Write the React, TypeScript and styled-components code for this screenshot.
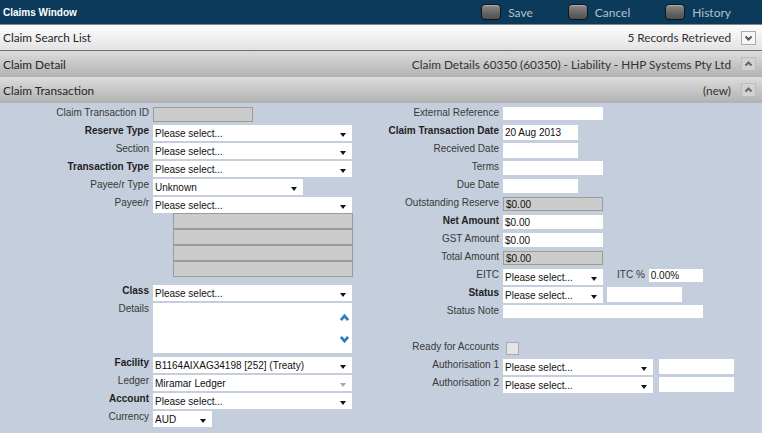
import React from "react";
import styled, { createGlobalStyle } from "styled-components";

const GlobalStyle = createGlobalStyle`
  html, body {
    margin: 0;
    padding: 0;
    background: #c5cedc;
  }
  body {
    font-family: "Liberation Sans", Arial, sans-serif;
  }
  * {
    box-sizing: border-box;
  }
`;

const Window = styled.div`
  width: 762px;
  height: 433px;
  overflow: hidden;
  display: flex;
  flex-direction: column;
  background: #c5cedc;
`;

const TopBar = styled.div`
  height: 25px;
  flex: none;
  display: flex;
  align-items: center;
  padding: 0 31px 0 3px;
  background: #0b3a5b;
  border-bottom: 1px solid #7e8994;
`;

const Title = styled.div`
  flex: 1;
  color: #ffffff;
  font-size: 10px;
  font-weight: 700;
`;

const Toolbar = styled.div`
  display: flex;
  align-items: center;
  gap: 35px;
`;

const ToolButton = styled.div`
  display: flex;
  align-items: center;
  gap: 7px;
  font-family: Lato, "Liberation Sans", sans-serif;
  font-size: 12px;
  color: #b3c0ce;
`;

const ToolIcon = styled.span`
  width: 20px;
  height: 16px;
  border-radius: 4px;
  border: 1px solid #141414;
  background: linear-gradient(#8c8c8c, #666666 55%, #505050);
  box-shadow: inset 0 1px 0 rgba(255, 255, 255, 0.3);
`;

const SectionBar = styled.div<{ $tone: "light" | "dark" }>`
  height: 26px;
  flex: none;
  display: flex;
  align-items: center;
  gap: 10px;
  padding: 0 6px 0 3px;
  font-family: Lato, "Liberation Sans", sans-serif;
  font-size: 11.8px;
  color: #262626;
  background: ${(p) =>
    p.$tone === "light"
      ? "linear-gradient(#fdfdfd, #e3e3e3)"
      : "linear-gradient(#dcdcdc, #b2b2b2)"};
  border-bottom: ${(p) => (p.$tone === "light" ? "1px solid #6e6e6e" : "none")};
`;

const BarTitle = styled.div`
  flex: 1;
`;

const BarInfo = styled.div`
  color: #333;
`;

const Toggle = styled.div<{ $tone: "light" | "dark" }>`
  width: 15px;
  height: 14px;
  display: flex;
  align-items: center;
  justify-content: center;
  border: 1px solid ${(p) => (p.$tone === "light" ? "#a9a9a9" : "#bdbdbd")};
  background: ${(p) => (p.$tone === "light" ? "#f6f6f6" : "#d2d2d2")};
`;

const FormBody = styled.div`
  flex: 1;
  display: flex;
  align-items: flex-start;
  padding-top: 4px;
`;

const Column = styled.div<{ $w: number }>`
  width: ${(p) => p.$w}px;
  display: flex;
  flex-direction: column;
`;

const Row = styled.div<{ $label: number; $h?: number; $after?: number }>`
  display: grid;
  grid-template-columns: ${(p) => p.$label}px auto;
  column-gap: 4px;
  align-items: start;
  height: ${(p) => p.$h ?? 16}px;
  margin-bottom: ${(p) => p.$after ?? 2}px;
`;

const Label = styled.label<{ $strong?: boolean }>`
  font-size: 10px;
  line-height: 12px;
  text-align: right;
  white-space: nowrap;
  color: ${(p) => (p.$strong ? "#1f1f1f" : "#383838")};
  font-weight: ${(p) => (p.$strong ? 700 : 400)};
`;

const InlineLabel = styled.span`
  font-size: 10px;
  line-height: 12px;
  color: #383838;
  margin: 0 0 0 10px;
  white-space: nowrap;
`;

const FieldGroup = styled.div<{ $gap: number }>`
  display: flex;
  align-items: flex-start;
  gap: ${(p) => p.$gap}px;
`;

const SelectBox = styled.div<{ $w: number }>`
  width: ${(p) => p.$w}px;
  height: 16px;
  display: flex;
  align-items: center;
  padding: 1px 6px 0 2px;
  background: #ffffff;
  font-size: 10px;
  color: #111;
`;

const SelectText = styled.span`
  flex: 1;
  white-space: nowrap;
  overflow: hidden;
`;

const Caret = styled.span<{ $muted?: boolean }>`
  width: 0;
  height: 0;
  margin-top: 2px;
  border-left: 3.5px solid transparent;
  border-right: 3.5px solid transparent;
  border-top: 4px solid ${(p) => (p.$muted ? "#a8a8a8" : "#141414")};
`;

const TextBox = styled.div<{ $w: number; $h: number; $grey?: boolean }>`
  width: ${(p) => p.$w}px;
  height: ${(p) => p.$h}px;
  display: flex;
  align-items: center;
  padding-left: 2px;
  font-size: 10px;
  color: #111;
  white-space: nowrap;
  background: ${(p) => (p.$grey ? "#cccccc" : "#ffffff")};
  border: ${(p) => (p.$grey ? "1px solid #9b9b9b" : "none")};
`;

const AddressStack = styled.div`
  margin-left: 20px;
  width: 180px;
  display: flex;
  flex-direction: column;
`;

const AddressLine = styled.div`
  height: 16px;
  background: #cccccc;
  border: 1px solid #9b9b9b;
`;

const NotesBox = styled.div`
  width: 199px;
  height: 50px;
  background: #ffffff;
  display: flex;
  justify-content: flex-end;
`;

const ScrollArrows = styled.div`
  width: 16px;
  padding-top: 11px;
  display: flex;
  flex-direction: column;
  align-items: center;
  gap: 13px;
`;

const CheckBox = styled.span`
  width: 13px;
  height: 13px;
  margin: 1px 0 0 3px;
  background: #e4e4e4;
  border: 1px solid #ababab;
`;

type Dir = "up" | "down";

const Chevron: React.FC<{ dir: Dir; color: string; w: number; h: number; stroke: number }> = ({
  dir,
  color,
  w,
  h,
  stroke,
}) => {
  const pad = stroke / 2 + 0.5;
  const pts =
    dir === "down"
      ? `${pad},${pad} ${w / 2},${h - pad} ${w - pad},${pad}`
      : `${pad},${h - pad} ${w / 2},${pad} ${w - pad},${h - pad}`;
  return (
    <svg width={w} height={h} viewBox={`0 0 ${w} ${h}`}>
      <polyline points={pts} fill="none" stroke={color} strokeWidth={stroke} strokeLinejoin="miter" />
    </svg>
  );
};

const Select: React.FC<{ w: number; value?: string; muted?: boolean }> = ({ w, value = "Please select...", muted }) => (
  <SelectBox $w={w}>
    <SelectText>{value}</SelectText>
    <Caret $muted={muted} />
  </SelectBox>
);

const L = 149;
const R = 145;

export default function App() {
  return (
    <>
      <GlobalStyle />
      <Window>
        <TopBar>
          <Title>Claims Window</Title>
          <Toolbar>
            <ToolButton>
              <ToolIcon />
              Save
            </ToolButton>
            <ToolButton>
              <ToolIcon />
              Cancel
            </ToolButton>
            <ToolButton>
              <ToolIcon />
              History
            </ToolButton>
          </Toolbar>
        </TopBar>

        <SectionBar $tone="light">
          <BarTitle>Claim Search List</BarTitle>
          <BarInfo>5 Records Retrieved</BarInfo>
          <Toggle $tone="light">
            <Chevron dir="down" color="#555" w={9} h={6} stroke={2} />
          </Toggle>
        </SectionBar>
        <SectionBar $tone="dark">
          <BarTitle>Claim Detail</BarTitle>
          <BarInfo>Claim Details 60350 (60350) - Liability - HHP Systems Pty Ltd</BarInfo>
          <Toggle $tone="dark">
            <Chevron dir="up" color="#666" w={9} h={6} stroke={2} />
          </Toggle>
        </SectionBar>
        <SectionBar $tone="dark">
          <BarTitle>Claim Transaction</BarTitle>
          <BarInfo>(new)</BarInfo>
          <Toggle $tone="dark">
            <Chevron dir="up" color="#666" w={9} h={6} stroke={2} />
          </Toggle>
        </SectionBar>

        <FormBody>
          <Column $w={354}>
            <Row $label={L}>
              <Label>Claim Transaction ID</Label>
              <TextBox $w={100} $h={15} $grey />
            </Row>
            <Row $label={L}>
              <Label $strong>Reserve Type</Label>
              <Select w={199} />
            </Row>
            <Row $label={L}>
              <Label>Section</Label>
              <Select w={199} />
            </Row>
            <Row $label={L}>
              <Label $strong>Transaction Type</Label>
              <Select w={199} />
            </Row>
            <Row $label={L}>
              <Label>Payee/r Type</Label>
              <Select w={150} value="Unknown" />
            </Row>
            <Row $label={L} $after={0}>
              <Label>Payee/r</Label>
              <Select w={199} />
            </Row>
            <Row $label={L} $h={64} $after={8}>
              <span />
              <AddressStack>
                <AddressLine />
                <AddressLine />
                <AddressLine />
                <AddressLine />
              </AddressStack>
            </Row>
            <Row $label={L}>
              <Label $strong>Class</Label>
              <Select w={199} />
            </Row>
            <Row $label={L} $h={50} $after={4}>
              <Label>Details</Label>
              <NotesBox>
                <ScrollArrows>
                  <Chevron dir="up" color="#2f7dc0" w={11} h={8} stroke={2.8} />
                  <Chevron dir="down" color="#2f7dc0" w={11} h={8} stroke={2.8} />
                </ScrollArrows>
              </NotesBox>
            </Row>
            <Row $label={L}>
              <Label $strong>Facility</Label>
              <Select w={199} value="B1164AIXAG34198 [252] (Treaty)" />
            </Row>
            <Row $label={L}>
              <Label>Ledger</Label>
              <Select w={199} value="Miramar Ledger" muted />
            </Row>
            <Row $label={L}>
              <Label $strong>Account</Label>
              <Select w={199} />
            </Row>
            <Row $label={L}>
              <Label>Currency</Label>
              <Select w={59} value="AUD" />
            </Row>
          </Column>

          <Column $w={408}>
            <Row $label={R}>
              <Label>External Reference</Label>
              <TextBox $w={100} $h={13} />
            </Row>
            <Row $label={R}>
              <Label $strong>Claim Transaction Date</Label>
              <TextBox $w={75} $h={15}>20 Aug 2013</TextBox>
            </Row>
            <Row $label={R}>
              <Label>Received Date</Label>
              <TextBox $w={75} $h={15} />
            </Row>
            <Row $label={R}>
              <Label>Terms</Label>
              <TextBox $w={100} $h={14} />
            </Row>
            <Row $label={R}>
              <Label>Due Date</Label>
              <TextBox $w={75} $h={14} />
            </Row>
            <Row $label={R}>
              <Label>Outstanding Reserve</Label>
              <TextBox $w={100} $h={14} $grey>$0.00</TextBox>
            </Row>
            <Row $label={R}>
              <Label $strong>Net Amount</Label>
              <TextBox $w={100} $h={14}>$0.00</TextBox>
            </Row>
            <Row $label={R}>
              <Label>GST Amount</Label>
              <TextBox $w={100} $h={14}>$0.00</TextBox>
            </Row>
            <Row $label={R}>
              <Label>Total Amount</Label>
              <TextBox $w={100} $h={14} $grey>$0.00</TextBox>
            </Row>
            <Row $label={R}>
              <Label>EITC</Label>
              <FieldGroup $gap={4}>
                <Select w={100} />
                <InlineLabel>ITC %</InlineLabel>
                <TextBox $w={54} $h={13}>0.00%</TextBox>
              </FieldGroup>
            </Row>
            <Row $label={R}>
              <Label $strong>Status</Label>
              <FieldGroup $gap={4}>
                <Select w={100} />
                <TextBox $w={75} $h={15} />
              </FieldGroup>
            </Row>
            <Row $label={R} $after={20}>
              <Label>Status Note</Label>
              <TextBox $w={200} $h={13} />
            </Row>
            <Row $label={R}>
              <Label>Ready for Accounts</Label>
              <CheckBox />
            </Row>
            <Row $label={R}>
              <Label>Authorisation 1</Label>
              <FieldGroup $gap={6}>
                <Select w={150} />
                <TextBox $w={75} $h={15} />
              </FieldGroup>
            </Row>
            <Row $label={R}>
              <Label>Authorisation 2</Label>
              <FieldGroup $gap={6}>
                <Select w={150} />
                <TextBox $w={75} $h={15} />
              </FieldGroup>
            </Row>
          </Column>
        </FormBody>
      </Window>
    </>
  );
}
